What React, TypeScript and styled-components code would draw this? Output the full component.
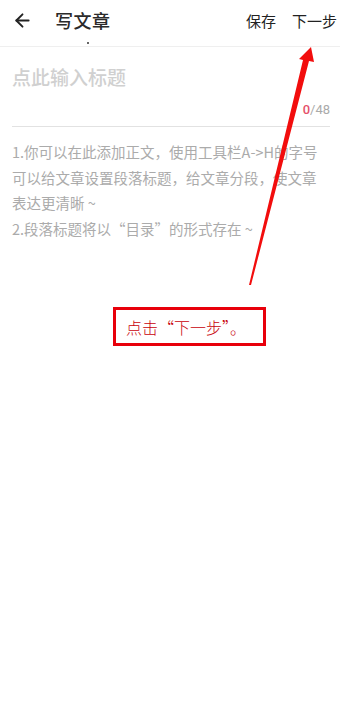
import { ArrowLeft } from "lucide-react";
import styled, { createGlobalStyle } from "styled-components";

const GlobalStyle = createGlobalStyle`
    html, body {
        margin: 0;
        padding: 0;
        background: #ffffff;
    }
    body {
        font-family: "Noto Sans CJK SC", "Noto Sans", sans-serif;
    }
    * {
        box-sizing: border-box;
    }
`;

const Page = styled.div`
    position: relative;
    width: 340px;
    height: 720px;
    overflow: hidden;
    background: #fff;
`;

const Header = styled.header`
    position: relative;
    height: 47px;
    display: flex;
    align-items: center;
    padding: 0 3px 0 12px;
    border-bottom: 1px solid #efefef;
`;

const Back = styled.div`
    display: flex;
    align-items: center;
    color: #222;
    margin-top: -6px;
`;

const Title = styled.h1`
    margin: -6px 0 0 22px;
    font-size: 18px;
    font-weight: 500;
    color: #2a2a2a;
    letter-spacing: 0.5px;
`;

// the small cursor dot under the title
const Dot = styled.span`
    position: absolute;
    left: 87px;
    top: 42px;
    width: 2px;
    height: 2px;
    border-radius: 50%;
    background: #333;
`;

const Actions = styled.div`
    margin-left: auto;
    margin-top: -6px;
    display: flex;
    gap: 16px;
`;

const Action = styled.span`
    font-size: 15px;
    color: #222;
`;

const Editor = styled.section`
    padding: 0 10px 0 12px;
`;

const TitleInput = styled.div`
    padding-top: 16px;
    font-size: 19px;
    font-weight: 500;
    color: #d0d0d0;
    line-height: 28px;
`;

const Counter = styled.div`
    text-align: right;
    margin-top: 10px;
    font-size: 13px;
    color: #aaa;
    line-height: 18px;
    font-family: "Roboto", "Noto Sans", sans-serif;

    b {
        color: #e5506a;
        font-weight: 500;
    }
`;

const Rule = styled.hr`
    border: none;
    border-top: 1px solid #e2e2e2;
    margin: 7px 0 0 0;
`;

const Body = styled.div`
    padding-top: 12px;
    width: 306px;
    font-size: 14.5px;
    line-height: 25.5px;
    color: #ababab;
    p {
        margin: 0;
    }
`;

const Callout = styled.div`
    position: absolute;
    left: 113px;
    top: 307px;
    width: 153px;
    height: 39px;
    border: 3px solid #e8000b;
    display: flex;
    align-items: center;
    padding-left: 10px;
    font-size: 16px;
    color: #c8000a;
    font-weight: 300;
`;

const Pointer = styled.svg`
    position: absolute;
    left: 0;
    top: 0;
    pointer-events: none;
`;

export default function App() {
    return (
        <Page>
            <GlobalStyle />
            <Header>
                <Back>
                    <ArrowLeft size={21} strokeWidth={2.2} />
                </Back>
                <Title>写文章</Title>
                <Dot />
                <Actions>
                    <Action>保存</Action>
                    <Action>下一步</Action>
                </Actions>
            </Header>
            <Editor>
                <TitleInput>点此输入标题</TitleInput>
                <Counter>
                    <b>0</b>/48
                </Counter>
                <Rule />
                <Body>
                    <p>1.你可以在此添加正文，使用工具栏A-&gt;H的字号可以给文章设置段落标题，给文章分段，使文章表达更清晰 ~</p>
                    <p>2.段落标题将以“目录”的形式存在 ~</p>
                </Body>
            </Editor>
            <Callout>点击“下一步”。</Callout>
            <Pointer width="340" height="720" viewBox="0 0 340 720">
                <polygon
                    points="311,47 314,62 309,61 251,285 249,285 303,60 299,59"
                    fill="#f20d0d"
                />
            </Pointer>
        </Page>
    );
}
